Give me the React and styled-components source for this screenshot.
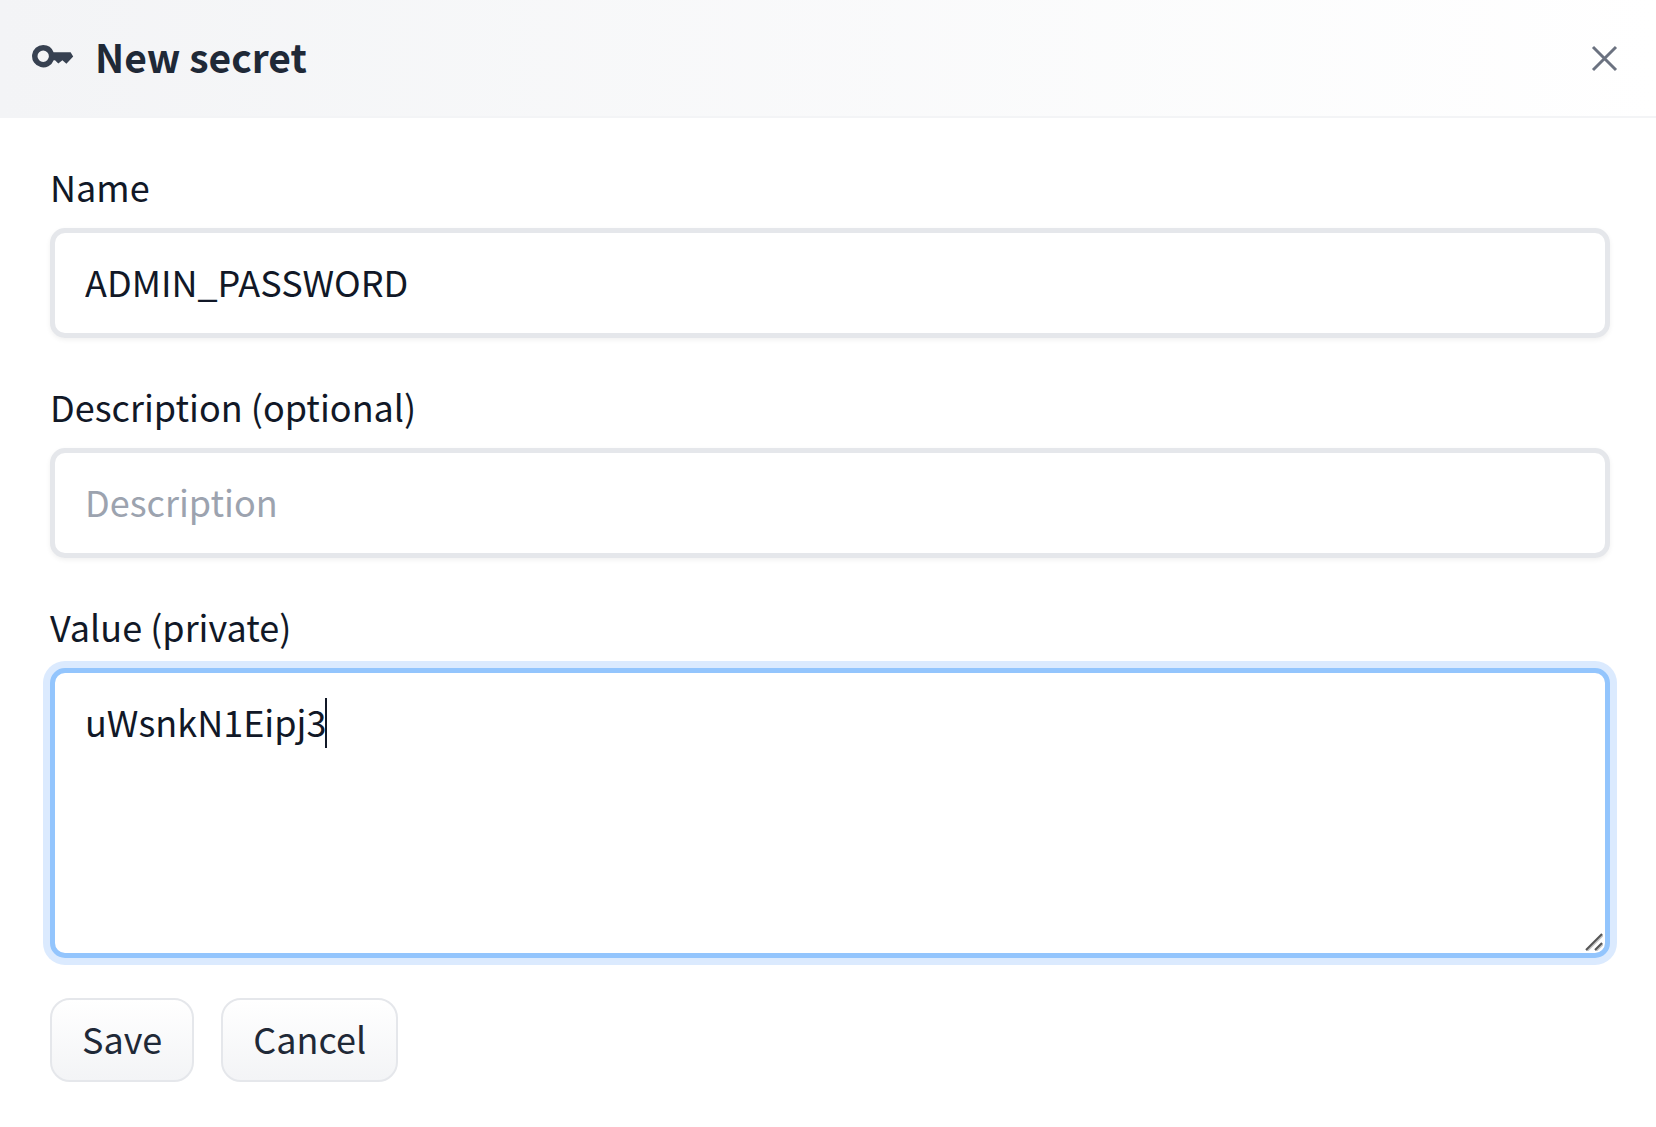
import React, { useState } from "react";
import styled, { createGlobalStyle, css } from "styled-components";

const GlobalStyle = createGlobalStyle`
  *, *::before, *::after {
    box-sizing: border-box;
  }
  body {
    margin: 0;
    background: #ffffff;
    color: #111827;
    font-family: "Noto Sans CJK SC", "Noto Sans", sans-serif;
    font-size: 36px;
    line-height: 60px;
  }
`;

const Dialog = styled.main`
  display: flex;
  flex-direction: column;
`;

const Header = styled.header`
  display: flex;
  align-items: center;
  padding: 26px 36px 30px 32px;
  border-bottom: 2px solid #f3f4f6;
  background: linear-gradient(to right, #f3f4f6, #ffffff);
`;

const Title = styled.h1`
  flex: 1;
  margin: 0 0 0 21px;
  color: #1f2937;
  font-size: 39px;
  font-weight: 600;
  line-height: 60px;
`;

const CloseButton = styled.button`
  display: flex;
  padding: 6px 0 0;
  border: 0;
  background: none;
  color: #6b7280;
  cursor: pointer;
`;

const Form = styled.form`
  display: flex;
  flex-direction: column;
  gap: 40px;
  padding: 40px 46px 44px 50px;
`;

const Field = styled.div`
  display: flex;
  flex-direction: column;
  gap: 14px;
`;

const Label = styled.label`
  line-height: 56px;
`;

const controlStyle = css`
  display: block;
  width: 100%;
  margin: 0;
  padding: 18px 30px 22px;
  border: 5px solid #e5e7eb;
  border-radius: 15px;
  outline: none;
  background: #ffffff;
  box-shadow: 0 2px 5px rgba(0, 0, 0, 0.06);
  color: inherit;
  font: inherit;

  &::placeholder {
    color: #9ca3af;
    opacity: 1;
  }
`;

const TextInput = styled.input`
  ${controlStyle}
  height: 110px;
`;

const ValueBox = styled.div`
  position: relative;
`;

const TextArea = styled.textarea`
  ${controlStyle}
  height: 290px;
  resize: none;
  border-color: #93c5fd;
  box-shadow: 0 0 0 7px #dbeafe;
  caret-color: ${(props) => (props.$customCaret ? "transparent" : "auto")};
`;

const Caret = styled.span`
  position: absolute;
  top: 30px;
  left: 275px;
  width: 2px;
  height: 50px;
  background: #111827;
  pointer-events: none;
`;

const Grip = styled.svg`
  position: absolute;
  right: 7px;
  bottom: 7px;
  pointer-events: none;
`;

const Actions = styled.div`
  display: flex;
  gap: 27px;
`;

const Button = styled.button`
  height: 84px;
  padding: 0 30px 4px;
  border: 2px solid #e5e7eb;
  border-radius: 20px;
  background: linear-gradient(to bottom, #ffffff, #f3f4f6);
  color: #1f2937;
  font: inherit;
  cursor: pointer;
`;

function KeyIcon() {
  return (
    <svg width="42" height="24" viewBox="0 0 42 24" aria-hidden="true">
      <path
        fill="#374151"
        fillRule="evenodd"
        d="M11.2 1a11.2 11.2 0 0 1 10.4 7.2h17L41.2 12.4 34.4 19.7 30.4 16.3 26.3 19.5 23 16.2h-1.3A11.2 11.2 0 1 1 11.2 1ZM11.2 6.5a5.7 5.7 0 1 0 0 11.4a5.7 5.7 0 0 0 0-11.4Z"
      />
    </svg>
  );
}

function CloseIcon() {
  return (
    <svg width="32" height="32" viewBox="0 0 32 32" aria-hidden="true">
      <path d="M5 4 28 27M28 4 5 27" stroke="currentColor" strokeWidth="3" />
    </svg>
  );
}

export default function App() {
  const [name, setName] = useState("ADMIN_PASSWORD");
  const [description, setDescription] = useState("");
  const [value, setValue] = useState("uWsnkN1Eipj3");
  const [pristine, setPristine] = useState(true);

  return (
    <>
      <GlobalStyle />
      <Dialog>
        <Header>
          <KeyIcon />
          <Title>New secret</Title>
          <CloseButton type="button" aria-label="Close">
            <CloseIcon />
          </CloseButton>
        </Header>
        <Form onSubmit={(event) => event.preventDefault()}>
          <Field>
            <Label htmlFor="name">Name</Label>
            <TextInput id="name" value={name} onChange={(e) => setName(e.target.value)} />
          </Field>
          <Field>
            <Label htmlFor="description">Description (optional)</Label>
            <TextInput
              id="description"
              placeholder="Description"
              value={description}
              onChange={(e) => setDescription(e.target.value)}
            />
          </Field>
          <Field>
            <Label htmlFor="value">Value (private)</Label>
            <ValueBox>
              <TextArea
                id="value"
                autoFocus
                spellCheck={false}
                value={value}
                $customCaret={pristine}
                onFocus={(e) => e.target.setSelectionRange(value.length, value.length)}
                onKeyDown={() => setPristine(false)}
                onPointerDown={() => setPristine(false)}
                onChange={(e) => setValue(e.target.value)}
              />
              {pristine && <Caret aria-hidden="true" />}
              <Grip width="18" height="18" viewBox="0 0 18 18" aria-hidden="true">
                <path d="M2 18 18 2M11 18 18 11" stroke="#c4c4c4" strokeWidth="2" />
                <path d="M1 17 17 1M10 17 17 10" stroke="#555555" strokeWidth="2" />
              </Grip>
            </ValueBox>
          </Field>
          <Actions>
            <Button type="submit">Save</Button>
            <Button type="button">Cancel</Button>
          </Actions>
        </Form>
      </Dialog>
    </>
  );
}
